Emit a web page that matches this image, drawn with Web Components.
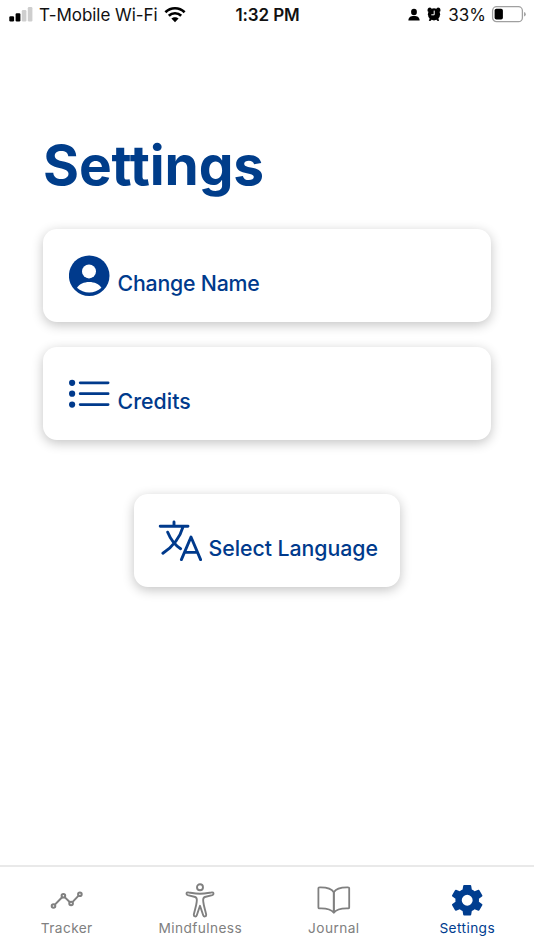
<!DOCTYPE html>
<html lang="en">
<head>
<meta charset="utf-8">
<title>Settings</title>
<style>
html,body{margin:0;height:100%;background:#fff;overflow:hidden}
body{font-family:Inter,"Liberation Sans",sans-serif}
</style>
</head>
<body>
<settings-app></settings-app>
<script>
const define = (name, html) => customElements.define(name, class extends HTMLElement {
  constructor() {
    super();
    const t = document.createElement('template');
    t.innerHTML = html;
    this.attachShadow({ mode: 'open' }).append(t.content.cloneNode(true));
  }
});

const ICONS = {
  person: ['0 0 41 41', '<circle cx="20.2" cy="20.7" r="20.3" fill="currentColor"/><circle cx="20" cy="16.4" r="7" fill="#fff"/><path d="M8 32.7C10.3 29 15 26.9 20.2 26.9S30.1 29 32.4 32.7C29.1 35.8 24.8 37.5 20.2 37.5S11.3 35.8 8 32.7Z" fill="#fff"/>'],
  list: ['0 0 41 41', '<g fill="currentColor"><circle cx="3.1" cy="9.8" r="3.1"/><circle cx="3.1" cy="20.7" r="3.1"/><circle cx="3.1" cy="31.6" r="3.1"/></g><path d="M11.2 9.8H39.1M11.2 20.7H39.1M11.2 31.6H39.1" stroke="currentColor" stroke-width="2.8" stroke-linecap="round"/>'],
  language: ['0 0 44 41', '<path d="M2.2 6.3H30M16 2V6.3M25.2 6.3C21.9 17.8 13.9 27.2 4.9 33.3M9.7 12.2C12.7 19.5 16.7 24.8 22.6 28.7M23.4 39.6L33 17L42.6 39.6M26.5 32.4H39.5" fill="none" stroke="currentColor" stroke-width="2.9" stroke-linecap="round" stroke-linejoin="round"/>'],
  tracker: ['0 0 36 36', '<g fill="none" stroke="currentColor" stroke-width="2"><circle cx="4.5" cy="24" r="1.8"/><circle cx="14.4" cy="13.8" r="1.8"/><circle cx="22.1" cy="21.5" r="1.8"/><circle cx="30.9" cy="12.2" r="1.8"/><path d="M5.9 22.6L13.1 15.2M15.7 15.1L20.9 20.2M23.4 20.1L29.6 13.6"/></g>'],
  mindfulness: ['0 0 36 36', '<g transform="translate(0 1)" fill="none" stroke="currentColor" stroke-width="1.9" stroke-linejoin="round" stroke-linecap="round"><circle cx="18" cy="4.3" r="3"/><path d="M6.1 9.4C4.2 9.1 3.9 11.6 5.7 12.1L13.2 14C15.1 14.6 15.1 16.3 14.7 18.9C14.3 23.1 12.7 27.3 11.8 31.6C11.6 33.6 14.1 34.2 14.8 32.2L18 22.8L21.2 32.2C21.9 34.2 24.5 33.6 24.2 31.6C23.3 27.3 21.7 23.1 21.3 18.9C20.9 16.3 20.9 14.6 22.8 14L30.3 12.1C32.1 11.6 31.8 9.1 29.9 9.4C25.5 10.1 22.2 10.8 18 10.8S10.5 10.1 6.1 9.4Z"/></g>'],
  journal: ['0 0 36 36', '<path d="M17.8 10.3C15.6 6.4 9.8 5.1 3.3 5.3Q2.4 5.3 2.4 6.2V25.4Q2.4 26.4 3.4 26.4C9.2 26.2 14.8 26.6 17.8 30.7C20.8 26.6 26.4 26.2 32.2 26.4Q33.2 26.4 33.2 25.4V6.2Q33.2 5.3 32.3 5.3C25.8 5.1 20 6.4 17.8 10.3ZV30" fill="none" stroke="currentColor" stroke-width="1.8" stroke-linejoin="round"/><path d="M17.8 10V30" stroke="currentColor" stroke-width="1.8"/>'],
  gear: ['0 0 36 36', '<path fill="currentColor" fill-rule="evenodd" d="M15.1 2.9H21.3Q22.1 2.9 22.2 3.7L22.8 7.6Q24.4 8.3 25.6 9.3L29.3 7.8Q30 7.5 30.4 8.2L33.3 13.2Q33.7 13.9 33 14.4L29.9 16.8Q30.1 18.2 29.9 19.7L33 22.1Q33.7 22.6 33.3 23.3L30.4 28.3Q30 29 29.3 28.7L25.6 27.2Q24.4 28.2 22.8 28.9L22.2 32.8Q22.1 33.6 21.3 33.6H15.1Q14.3 33.6 14.2 32.8L13.6 28.9Q12 28.2 10.8 27.2L7.1 28.7Q6.4 29 6 28.3L3.1 23.3Q2.7 22.6 3.4 22.1L6.5 19.7Q6.3 18.2 6.5 16.8L3.4 14.4Q2.7 13.9 3.1 13.2L6 8.2Q6.4 7.5 7.1 7.8L10.8 9.3Q12 8.3 13.6 7.6L14.2 3.7Q14.3 2.9 15.1 2.9ZM18.2 12.8A5.4 5.4 0 1 0 18.2 23.7A5.4 5.4 0 1 0 18.2 12.8Z"/>'],
  signal: ['0 0 24 30', '<g fill="#000"><rect x="0.3" y="16.2" width="4.8" height="5.2" rx="1.2"/><rect x="6.6" y="13.3" width="4.8" height="8.1" rx="1.2"/></g><g fill="#cecece"><rect x="12.8" y="10" width="4.6" height="11.4" rx="1.2"/><rect x="18.8" y="7" width="4.6" height="14.4" rx="1.2"/></g>'],
  wifi: ['0 0 22 30', '<g fill="none" stroke="#000" stroke-width="2.7"><path d="M1.4 12.2C6.8 6.9 15.2 6.9 20.6 12.2M4.8 15.8C8.3 12.4 13.7 12.4 17.2 15.8"/></g><path d="M7.4 18.6C9.5 16.7 12.5 16.7 14.6 18.6L11 22.2Z"/>'],
  contact: ['0 0 12 30', '<ellipse cx="6" cy="12" rx="2.9" ry="3.3"/><path d="M0.4 20.4C0.4 17.3 2.5 16 6 16S11.6 17.3 11.6 20.4Z"/>'],
  alarm: ['0 0 14 30', '<circle cx="7" cy="14.3" r="6.1"/><path d="M0.6 11.3Q0 7.7 3.2 7.5L4.8 8.7L1.6 12ZM13.4 11.3Q14 7.7 10.8 7.5L9.2 8.7L12.4 12ZM1.8 20.8L3 17.8L5 19.4L3.3 21ZM12.2 20.8L11 17.8L9 19.4L10.7 21Z"/><path d="M7.2 10.6V14.8H4.3" fill="none" stroke="#fff" stroke-width="1"/>'],
  battery: ['0 0 35 30', '<rect x="1.6" y="6.7" width="29.8" height="15" rx="4" fill="none" stroke="#a0a0a0" stroke-width="1.3"/><rect x="3.6" y="8.8" width="8.3" height="10.8" rx="1.8"/><path d="M33.1 12V16.6Q34.7 16 34.7 14.3T33.1 12Z" fill="#999"/>']
};

customElements.define('app-icon', class extends HTMLElement {
  connectedCallback() {
    const [box, body] = ICONS[this.getAttribute('name')];
    const [, , w, h] = box.split(' ');
    this.attachShadow({ mode: 'open' }).innerHTML =
      `<style>:host{display:block;flex:none}svg{display:block}</style><svg width="${w}" height="${h}" viewBox="${box}">${body}</svg>`;
  }
});

define('status-bar', `<style>
:host{display:grid;grid-template-columns:1fr auto 1fr;height:30px;padding:0 8px 0 9px;color:#111;font-size:17px;line-height:30px;white-space:nowrap}
div{display:flex}
.carrier{margin:0 6px 0 6px;letter-spacing:-.05px}
.time{font-weight:600;font-size:17px;letter-spacing:-.1px}
.right{justify-content:flex-end}
.pct{margin:0 5px 0 7px}
.right app-icon[name=alarm]{margin-left:7px}
</style>
<div><app-icon name="signal"></app-icon><span class="carrier">T-Mobile Wi-Fi</span><app-icon name="wifi"></app-icon></div>
<span class="time">1:32 PM</span>
<div class="right"><app-icon name="contact"></app-icon><app-icon name="alarm"></app-icon><span class="pct">33%</span><app-icon name="battery"></app-icon></div>`);

define('option-card', `<style>
:host{display:flex;box-sizing:border-box;height:93px;padding:26px;border-radius:14px;background:#fff;color:#003a8c;box-shadow:0 3px 12px rgba(0,0,0,.24);font-size:21.3px;font-weight:500;line-height:28px;white-space:nowrap}
.label{margin:14px 0 0 7.5px;letter-spacing:var(--track,0)}
</style><slot name="icon"></slot><span class="label"><slot></slot></span>`);

define('tab-item', `<style>
:host{display:flex;flex:1;flex-direction:column;align-items:center;padding-top:15px;color:#808080;font-size:13.7px;line-height:20px;letter-spacing:.4px}
:host([active]){color:#003d8f}
</style><slot name="icon"></slot><span><slot></slot></span>`);

define('tab-bar', `<style>
:host{display:flex;box-sizing:border-box;height:85px;border-top:2px solid #e9e9e9;background:#fff}
</style><slot></slot>`);

define('settings-app', `<style>
:host{display:flex;flex-direction:column;height:950px;width:534px;overflow:hidden}
main{flex:1;display:flex;flex-direction:column;padding:101px 43px 0}
h1{margin:0 0 30px;color:#003d8a;font-size:55px;line-height:68px;font-weight:650;letter-spacing:-.1px}
.name{--track:-.2px}
.second{margin-top:25px;--track:.05px}
.lang{align-self:center;width:266px;margin-top:54px;padding-left:24px;--track:-.05px}
.lang app-icon{margin-right:-1px}
</style>
<status-bar></status-bar>
<main>
<h1>Settings</h1>
<option-card class="name"><app-icon slot="icon" name="person"></app-icon>Change Name</option-card>
<option-card class="second"><app-icon slot="icon" name="list"></app-icon>Credits</option-card>
<option-card class="lang"><app-icon slot="icon" name="language"></app-icon>Select Language</option-card>
</main>
<tab-bar>
<tab-item><app-icon slot="icon" name="tracker"></app-icon>Tracker</tab-item>
<tab-item><app-icon slot="icon" name="mindfulness"></app-icon>Mindfulness</tab-item>
<tab-item><app-icon slot="icon" name="journal"></app-icon>Journal</tab-item>
<tab-item active><app-icon slot="icon" name="gear"></app-icon>Settings</tab-item>
</tab-bar>`);
</script>
</body>
</html>
